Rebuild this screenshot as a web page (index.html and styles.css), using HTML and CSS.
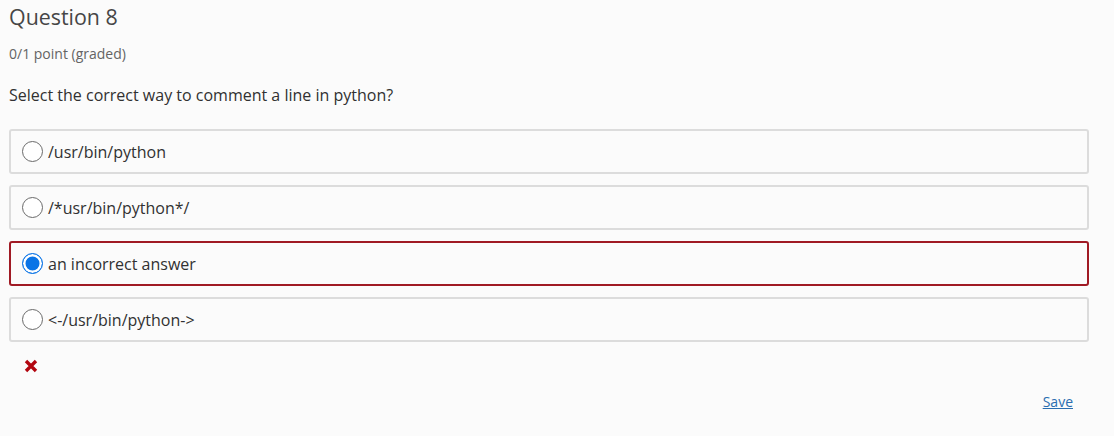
FILE: index.html
```html
<!DOCTYPE html>
<html>
<head>
<meta charset="utf-8">
<link rel="stylesheet" href="styles.css">
</head>
<body>
<div class="problem">
  <h3 class="title">Question 8</h3>
  <div class="points">0/1 point (graded)</div>
  <p class="prompt">Select the correct way to comment a line in python?</p>
  <div class="choices">
    <label class="choice"><span class="radio"></span><span>/usr/bin/python</span></label>
    <label class="choice"><span class="radio"></span><span>/*usr/bin/python*/</span></label>
    <label class="choice incorrect"><span class="radio checked"></span><span>an incorrect answer</span></label>
    <label class="choice"><span class="radio"></span><span>&lt;-/usr/bin/python-&gt;</span></label>
  </div>
  <div class="status">
    <svg width="14" height="14" viewBox="0 0 14 14"><path d="M2 2 L12 12 M12 2 L2 12" stroke="#b20610" stroke-width="3.4" stroke-linecap="butt"/></svg>
  </div>
  <div class="actions"><a class="save" href="#">Save</a></div>
</div>
</body>
</html>
```
FILE: styles.css
```css
html, body {
  margin: 0;
  padding: 0;
  background: #fbfbfb;
}
body {
  font-family: "Open Sans", "Liberation Sans", sans-serif;
  color: #313131;
}
.problem {
  width: 1080px;
  padding-left: 9px;
}
.title {
  margin: 0;
  padding-top: 2px;
  font-size: 21.4px;
  font-weight: 400;
  line-height: 30px;
  color: #464646;
}
.points {
  margin-top: 13px;
  font-size: 14px;
  line-height: 18px;
  color: #646464;
}
.prompt {
  margin: 0;
  margin-top: 21px;
  font-size: 16px;
  line-height: 22px;
  color: #313131;
}
.choices {
  margin-top: 23px;
  display: flex;
  flex-direction: column;
  gap: 11px;
}
.choice {
  display: flex;
  align-items: center;
  height: 41px;
  border: 2px solid #dcdcdc;
  border-radius: 3px;
  padding-left: 11px;
  font-size: 16px;
  color: #313131;
}
.choice.incorrect {
  border-color: #a01a24;
}
.radio {
  box-sizing: border-box;
  width: 21px;
  height: 21px;
  border: 1px solid #6a6a6a;
  border-radius: 50%;
  background: #fff;
  margin-right: 5px;
}
.radio.checked {
  border: 1.5px solid #0a74e6;
  background: #0a74e6;
  box-shadow: inset 0 0 0 2.5px #fff;
}
.status {
  display: flex;
  padding-left: 15px;
  margin-top: 17px;
  height: 14px;
}
.actions {
  display: flex;
  justify-content: flex-end;
  padding-right: 16px;
  margin-top: 19px;
}
.save {
  font-size: 14px;
  color: #2a6db0;
  text-decoration: underline;
}
```
